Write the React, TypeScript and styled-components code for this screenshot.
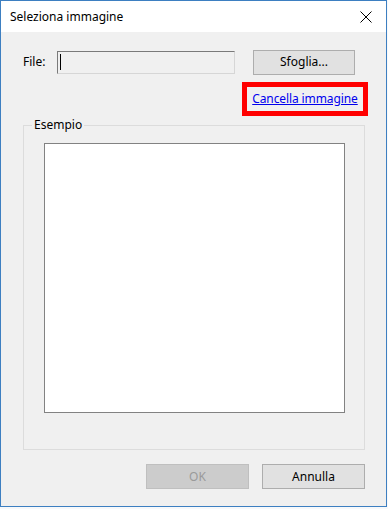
import React from "react";
import styled, { createGlobalStyle } from "styled-components";

const GlobalStyle = createGlobalStyle`
    html, body {
        margin: 0;
        padding: 0;
        background: #f7f9fb;
    }
    * {
        box-sizing: border-box;
    }
`

const Window = styled.div`
    width: 387px;
    height: 507px;
    border: 1px solid #3d7fc1;
    background-color: #f0f0f0;
    display: flex;
    flex-direction: column;
    font-family: 'Noto Sans', 'Open Sans', sans-serif;
    font-size: 12px;
    color: #000;
`

const TitleBar = styled.div`
    height: 31px;
    background-color: #fff;
    display: flex;
    align-items: center;
    justify-content: space-between;
    padding: 0 7px 0 9px;
    flex-shrink: 0;
`

const TitleText = styled.span`
    font-size: 12px;
    padding-bottom: 1px;
`

const CloseButton = styled.button`
    width: 26px;
    height: 26px;
    border: 0;
    background: transparent;
    display: flex;
    align-items: center;
    justify-content: center;
    padding: 0;
    cursor: pointer;
`

const Body = styled.div`
    flex: 1;
    display: flex;
    flex-direction: column;
    padding: 18px 21px 0 22px;
`

const FileRow = styled.div`
    display: flex;
    align-items: center;
    height: 24px;
`

const FileLabel = styled.label`
    width: 34px;
    padding-bottom: 1px;
`

const FileInput = styled.div`
    width: 178px;
    height: 23px;
    border: 1px solid #7a7a7a;
    border-right-color: #d6d6d6;
    border-bottom-color: #d6d6d6;
    background-color: #f0f0f0;
    display: flex;
    align-items: center;
    padding-left: 2px;
`

const Caret = styled.span`
    width: 1px;
    height: 16px;
    background-color: #000;
`

const Button = styled.button<{ $disabled?: boolean }>`
    width: 103px;
    height: 25px;
    font-family: inherit;
    font-size: 12px;
    border: 1px solid ${({ $disabled }) => ($disabled ? "#bfbfbf" : "#adadad")};
    background-color: ${({ $disabled }) => ($disabled ? "#cccccc" : "#e1e1e1")};
    color: ${({ $disabled }) => ($disabled ? "#9a9a9a" : "#000")};
    padding: 0 0 1px;
    cursor: ${({ $disabled }) => ($disabled ? "default" : "pointer")};
`

const BrowseButton = styled(Button)`
    width: 102px;
    margin-left: 18px;
`

const LinkRow = styled.div`
    display: flex;
    justify-content: flex-end;
    margin-top: 8px;
    margin-right: -3px;
`

const Highlight = styled.div`
    width: 126px;
    height: 34px;
    border: 5px solid #ff0000;
    display: flex;
    align-items: center;
    justify-content: center;
    padding-bottom: 1px;
`

const Link = styled.a`
    color: #0000ee;
    text-decoration: underline;
    letter-spacing: -0.1px;
    cursor: pointer;
`

const Group = styled.fieldset`
    margin: 1px 0 0;
    padding: 10px 19px 36px 20px;
    border: 1px solid #dcdcdc;
    min-width: 0;
`

const Legend = styled.legend`
    padding: 0 2px;
    margin-left: -12px;
    line-height: 16px;
`

const Preview = styled.div`
    width: 301px;
    height: 270px;
    background-color: #fff;
    border: 1px solid #828282;
`

const ButtonRow = styled.div`
    display: flex;
    justify-content: flex-end;
    gap: 13px;
    margin-top: 14px;
`

function App() {
    return (
        <>
            <GlobalStyle />
            <Window>
                <TitleBar>
                    <TitleText>Seleziona immagine</TitleText>
                    <CloseButton aria-label="Chiudi">
                        <svg width="12" height="12" viewBox="0 0 12 12">
                            <path d="M0.5 0.5L11.5 11.5M11.5 0.5L0.5 11.5" stroke="#000" strokeWidth="1" fill="none" />
                        </svg>
                    </CloseButton>
                </TitleBar>
                <Body>
                    <FileRow>
                        <FileLabel>File:</FileLabel>
                        <FileInput>
                            <Caret />
                        </FileInput>
                        <BrowseButton>Sfoglia...</BrowseButton>
                    </FileRow>
                    <LinkRow>
                        <Highlight>
                            <Link>Cancella immagine</Link>
                        </Highlight>
                    </LinkRow>
                    <Group>
                        <Legend>Esempio</Legend>
                        <Preview />
                    </Group>
                    <ButtonRow>
                        <Button $disabled disabled>OK</Button>
                        <Button>Annulla</Button>
                    </ButtonRow>
                </Body>
            </Window>
        </>
    );
}

export default App;
